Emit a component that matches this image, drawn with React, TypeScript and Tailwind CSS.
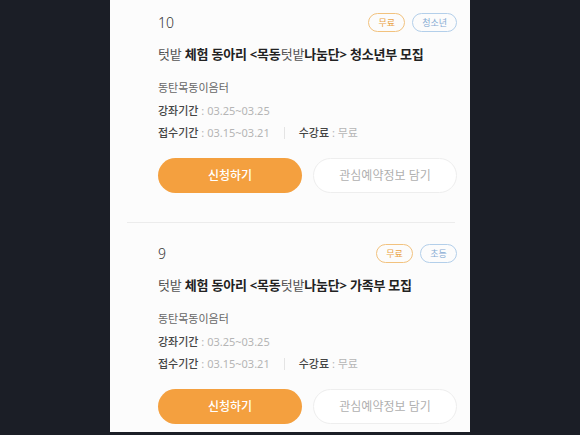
import React from "react";

type Item = {
  no: number;
  group: string;
  part: string;
};

const items: Item[] = [
  { no: 10, group: "청소년", part: "청소년부" },
  { no: 9, group: "초등", part: "가족부" },
];

function ProgramCard({ item }: { item: Item }) {
  return (
    <div className="pl-[48px] pr-[13px] pt-[21px] pb-[29px]">
      <div className="flex h-[19px] items-center justify-between">
        <span className="text-[14px] font-light leading-none text-[#333]">{item.no}</span>
        <div className="flex gap-[7px]">
          <span className="flex h-[19px] w-[37px] items-center justify-center rounded-full border border-[#f2c27e] text-[9px] text-[#eaa446]">
            무료
          </span>
          <span className="flex h-[19px] min-w-[37px] items-center justify-center rounded-full border border-[#b3cfea] px-[9px] text-[9px] text-[#86abd3]">
            {item.group}
          </span>
        </div>
      </div>
      <h2 className="mt-[13px] text-[13px] font-bold leading-[18px] tracking-[-0.2px] text-[#222]">
        <span className="font-normal text-[#555]">텃밭</span> 체험 동아리 &lt;목동
        <span className="font-normal text-[#555]">텃밭</span>나눔단&gt; {item.part} 모집
      </h2>
      <p className="mt-[17px] text-[11px] leading-[16px] text-[#666]">동탄목동이음터</p>
      <p className="mt-[7px] text-[11px] leading-[16px]">
        <span className="font-medium text-[#444]">강좌기간</span>
        <span className="text-[#b5b5b5]"> : 03.25~03.25</span>
      </p>
      <div className="mt-[6px] flex items-center text-[11px] leading-[16px]">
        <span className="font-medium text-[#444]">접수기간</span>
        <span className="text-[#b5b5b5]">&nbsp;: 03.15~03.21</span>
        <span className="mx-[14px] h-[12px] w-px bg-[#e4e4e4]" />
        <span className="font-medium text-[#444]">수강료</span>
        <span className="text-[#b5b5b5]">&nbsp;: 무료</span>
      </div>
      <div className="mt-[17px] flex gap-[11px]">
        <button className="flex h-[35px] w-[144px] items-center justify-center rounded-full bg-[#f4a03f] text-[12px] font-medium text-white">
          신청하기
        </button>
        <button className="flex h-[35px] w-[144px] items-center justify-center rounded-full border border-[#eeeeee] bg-white text-[12px] text-[#b0b0b0]">
          관심예약정보 담기
        </button>
      </div>
    </div>
  );
}

export default function App() {
  return (
    <div
      className="flex h-[435px] w-[580px] justify-center overflow-hidden bg-[#1b1e26]"
      style={{ fontFamily: '"Noto Sans", "Noto Sans CJK KR", sans-serif' }}
    >
      <div className="h-[432px] w-[360px] overflow-hidden bg-[#fcfcfc]">
        <div className="-mt-[8px]">
          {items.map((item, i) => (
            <div key={item.no}>
              {i > 0 && <div className="ml-[17px] mr-[15px] h-px bg-[#ececec]" />}
              <ProgramCard item={item} />
            </div>
          ))}
        </div>
      </div>
    </div>
  );
}
